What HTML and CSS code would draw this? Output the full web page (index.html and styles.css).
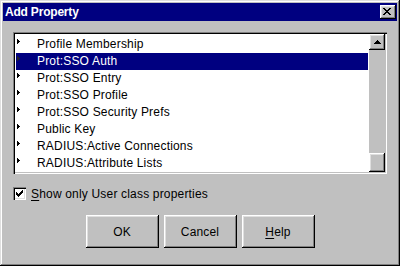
FILE: index.html
```html
<!DOCTYPE html>
<html>
<head>
<meta charset="utf-8">
<link rel="stylesheet" href="styles.css">
</head>
<body>
<div class="window">
  <div class="titlebar">
    <span class="title">Add Property</span>
    <div class="close">
      <svg width="8" height="7" viewBox="0 0 8 7" shape-rendering="crispEdges"><path fill="#000" d="M0 0h2v1H0zM6 0h2v1H6zM1 1h2v1H1zM5 1h2v1H5zM2 2h4v1H2zM3 3h2v1H3zM2 4h4v1H2zM1 5h2v1H1zM5 5h2v1H5zM0 6h2v1H0zM6 6h2v1H6z"/></svg>
    </div>
  </div>
  <div class="body">
    <div class="listbox">
      <ul class="list">
        <li class="item"><svg class="arrow" width="3" height="5" viewBox="0 0 3 5" shape-rendering="crispEdges"><path d="M0 0h1v5H0zM1 1h1v3H1zM2 2h1v1H2z"/></svg><span class="label">Profile Membership</span></li>
        <li class="item selected"><svg class="arrow" width="3" height="5" viewBox="0 0 3 5" shape-rendering="crispEdges"><path d="M0 0h1v5H0zM1 1h1v3H1zM2 2h1v1H2z"/></svg><span class="label">Prot:SSO Auth</span></li>
        <li class="item"><svg class="arrow" width="3" height="5" viewBox="0 0 3 5" shape-rendering="crispEdges"><path d="M0 0h1v5H0zM1 1h1v3H1zM2 2h1v1H2z"/></svg><span class="label">Prot:SSO Entry</span></li>
        <li class="item"><svg class="arrow" width="3" height="5" viewBox="0 0 3 5" shape-rendering="crispEdges"><path d="M0 0h1v5H0zM1 1h1v3H1zM2 2h1v1H2z"/></svg><span class="label">Prot:SSO Profile</span></li>
        <li class="item"><svg class="arrow" width="3" height="5" viewBox="0 0 3 5" shape-rendering="crispEdges"><path d="M0 0h1v5H0zM1 1h1v3H1zM2 2h1v1H2z"/></svg><span class="label">Prot:SSO Security Prefs</span></li>
        <li class="item"><svg class="arrow" width="3" height="5" viewBox="0 0 3 5" shape-rendering="crispEdges"><path d="M0 0h1v5H0zM1 1h1v3H1zM2 2h1v1H2z"/></svg><span class="label">Public Key</span></li>
        <li class="item"><svg class="arrow" width="3" height="5" viewBox="0 0 3 5" shape-rendering="crispEdges"><path d="M0 0h1v5H0zM1 1h1v3H1zM2 2h1v1H2z"/></svg><span class="label">RADIUS:Active Connections</span></li>
        <li class="item"><svg class="arrow" width="3" height="5" viewBox="0 0 3 5" shape-rendering="crispEdges"><path d="M0 0h1v5H0zM1 1h1v3H1zM2 2h1v1H2z"/></svg><span class="label">RADIUS:Attribute Lists</span></li>
      </ul>
      <div class="scrollbar">
        <div class="sb-btn">
          <svg width="7" height="4" viewBox="0 0 7 4" shape-rendering="crispEdges"><path fill="#000" d="M3 0h1v1H3zM2 1h3v1H2zM1 2h5v1H1zM0 3h7v1H0z"/></svg>
        </div>
        <div class="sb-track"></div>
        <div class="sb-thumb"></div>
      </div>
    </div>
    <div class="check">
      <span class="box">
        <svg width="7" height="7" viewBox="0 0 7 7" shape-rendering="crispEdges"><path fill="#000" d="M6 0h1v1H6zM5 1h2v1H5zM0 2h1v1H0zM4 2h3v1H4zM0 3h2v1H0zM3 3h3v1H3zM0 4h5v1H0zM1 5h3v1H1zM2 6h1v1H2z"/></svg>
      </span>
      <span class="check-label"><u>S</u>how only User class properties</span>
    </div>
    <div class="buttons">
      <div class="btn">OK</div>
      <div class="btn">Cancel</div>
      <div class="btn"><u>H</u>elp</div>
    </div>
  </div>
</div>
</body>
</html>
```
FILE: styles.css
```css
* { box-sizing: border-box; }
body {
  margin: 0;
  background: #c0c0c0;
  font-family: "Liberation Sans", Arial, sans-serif;
  font-size: 12px;
  letter-spacing: 0.18px;
  color: #000;
}
.window {
  width: 400px;
  height: 266px;
  padding: 3px;
  background: #c0c0c0;
  box-shadow: inset -1px -1px #000, inset 1px 1px #dfdfdf, inset -2px -2px #808080, inset 2px 2px #fff;
  display: flex;
  flex-direction: column;
}
.titlebar {
  height: 18px;
  background: #000080;
  display: flex;
  align-items: center;
  justify-content: space-between;
  padding: 0 1px 0 2px;
}
.title {
  color: #fff;
  font-weight: bold;
  font-size: 12px;
  letter-spacing: -0.2px;
}
.close {
  width: 16px;
  height: 14px;
  background: #c0c0c0;
  box-shadow: inset -1px -1px #000, inset 1px 1px #fff, inset -2px -2px #808080, inset 2px 2px #dfdfdf;
  display: flex;
  align-items: flex-start;
  padding: 3px 0 0 3px;
}
.close svg { display: block; }
.body {
  flex: 1;
  padding: 11px 10px 0;
  display: flex;
  flex-direction: column;
}
.listbox {
  height: 142px;
  display: flex;
  padding: 2px;
  background: #fff;
  box-shadow: inset 1px 1px #808080, inset 2px 2px #000, inset -1px -1px #fff, inset -2px -2px #c0c0c0;
}
.list {
  flex: 1;
  margin: 0;
  padding: 2px 0 0;
  list-style: none;
  overflow: hidden;
}
.item {
  height: 17px;
  line-height: 17px;
  margin: 0 1px;
  padding-left: 1px;
  display: flex;
  align-items: flex-start;
  white-space: nowrap;
}
.arrow {
  display: block;
  margin-top: 3px;
  flex: none;
  fill: #000;
}
.label { margin-left: 17px; }
.selected { background: #000080; color: #fff; }
.selected .arrow { fill: #202030; }
.scrollbar {
  width: 16px;
  display: flex;
  flex-direction: column;
  background: #c0c0c0;
}
.sb-btn {
  height: 16px;
  box-shadow: inset -1px -1px #000, inset 1px 1px #fff, inset -2px -2px #808080, inset 2px 2px #dfdfdf;
  padding: 6px 0 0 5px;
}
.sb-btn svg { display: block; }
.sb-track { flex: 1; }
.sb-thumb {
  height: 19px;
  box-shadow: inset -1px -1px #000, inset 1px 1px #fff, inset -2px -2px #808080, inset 2px 2px #dfdfdf;
}
.check {
  margin-top: 13px;
  height: 13px;
  display: flex;
  align-items: center;
}
.box {
  width: 13px;
  height: 13px;
  background: #fff;
  box-shadow: inset 1px 1px #808080, inset 2px 2px #000, inset -1px -1px #fff, inset -2px -2px #dfdfdf;
  padding: 3px 0 0 3px;
  flex: none;
}
.box svg { display: block; }
.check-label { margin-left: 5px; white-space: nowrap; }
.buttons {
  margin-top: 15px;
  display: flex;
  justify-content: center;
  gap: 5px;
}
.btn {
  width: 73px;
  height: 33px;
  display: flex;
  align-items: center;
  justify-content: center;
  box-shadow: inset -1px -1px #000, inset 1px 1px #fff, inset -2px -2px #808080, inset 2px 2px #dfdfdf;
}
u { text-decoration-thickness: 1px; text-underline-offset: 2px; }
```
